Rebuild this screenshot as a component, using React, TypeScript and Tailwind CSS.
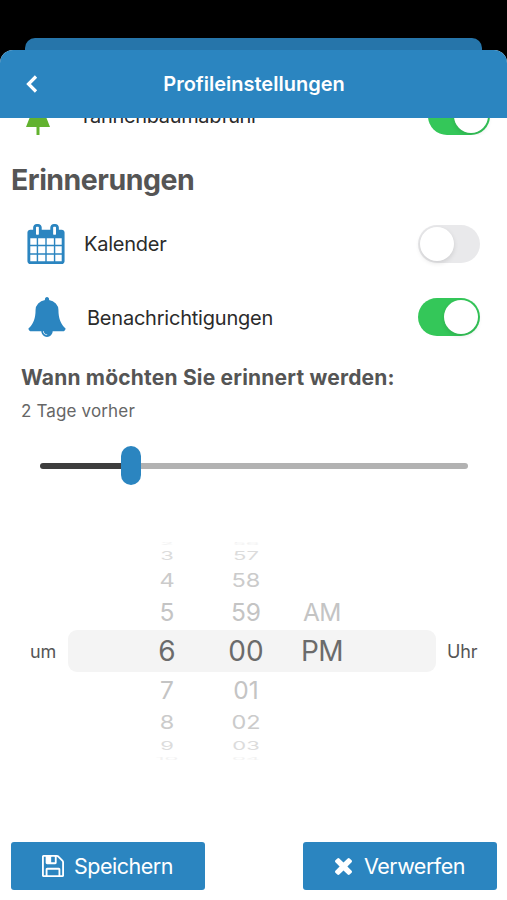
import React from "react";

type IconProps = { className?: string };

function TreeIcon({ className }: IconProps) {
  return (
    <svg viewBox="0 0 24 39" fill="currentColor" className={className}>
      <path d="M12 0 18 9h-3l6 10h-3l2.500 3L24 31H13.500v8h-3v-8H0l3.500-9L6 19H3L9 9H6z" />
    </svg>
  );
}

function CalendarIcon({ className }: IconProps) {
  return (
    <svg viewBox="64 0 1664 1792" fill="currentColor" className={className}>
      <path d="M192 1664h288v-288h-288v288zm352 0h320v-288h-320v288zm-352-352h288v-320h-288v320zm352 0h320v-320h-320v320zm-352-384h288v-288h-288v288zm736 736h320v-288h-320v288zm-384-736h320v-288h-320v288zm768 736h288v-288h-288v288zm-384-352h320v-320h-320v320zm-352-864v-288q0-13-9.5-22.5t-22.5-9.5h-64q-13 0-22.5 9.5t-9.5 22.5v288q0 13 9.5 22.5t22.5 9.5h64q13 0 22.5-9.5t9.5-22.5zm736 864h288v-320h-288v320zm-384-384h320v-288h-320v288zm384 0h288v-288h-288v288zm32-480v-288q0-13-9.5-22.5t-22.5-9.5h-64q-13 0-22.5 9.5t-9.5 22.5v288q0 13 9.5 22.5t22.5 9.5h64q13 0 22.5-9.5t9.5-22.5zm384-64v1280q0 52-38 90t-90 38h-1408q-52 0-90-38t-38-90v-1280q0-52 38-90t90-38h128v-96q0-66 47-113t113-47h64q66 0 113 47t47 113v96h384v-96q0-66 47-113t113-47h64q66 0 113 47t47 113v96h128q52 0 90 38t38 90z" />
    </svg>
  );
}

function BellIcon({ className }: IconProps) {
  return (
    <svg viewBox="64 0 1664 1792" fill="currentColor" className={className}>
      <path d="M912 1696q0-16-16-16-59 0-101.5-42.5t-42.5-101.5q0-16-16-16t-16 16q0 73 51.5 124.5t124.5 51.5q16 0 16-16zm816-288q0 52-38 90t-90 38h-448q0 106-75 181t-181 75-181-75-75-181h-448q-52 0-90-38t-38-90q50-42 91-88t85-119.5 74.5-158.5 50-206 19.5-260q0-152 117-282.5t307-158.5q-8-19-8-39 0-40 28-68t68-28 68 28 28 68q0 20-8 39 190 28 307 158.5t117 282.5q0 139 19.5 260t50 206 74.5 158.5 85 119.5 91 88z" />
    </svg>
  );
}

function SaveIcon({ className }: IconProps) {
  return (
    <svg viewBox="128 128 1536 1536" fill="currentColor" className={className}>
      <path d="M512 1536h768v-384h-768v384zm896 0h128v-896q0-14-10-38.5t-20-34.5l-281-281q-10-10-34-20t-39-10v416q0 40-28 68t-68 28h-576q-40 0-68-28t-28-68v-416h-128v1280h128v-416q0-40 28-68t68-28h832q40 0 68 28t28 68v416zm-384-928v-320q0-13-9.5-22.5t-22.5-9.5h-192q-13 0-22.5 9.5t-9.5 22.5v320q0 13 9.5 22.5t22.5 9.5h192q13 0 22.5-9.5t9.5-22.5zm640 32v928q0 40-28 68t-68 28h-1344q-40 0-68-28t-28-68v-1344q0-40 28-68t68-28h928q40 0 88 20t76 48l280 280q28 28 48 76t20 88z" />
    </svg>
  );
}

function CloseIcon({ className }: IconProps) {
  return (
    <svg viewBox="302 366 1188 1188" fill="currentColor" className={className}>
      <path d="M1490 1322q0 40-28 68l-136 136q-28 28-68 28t-68-28l-294-294-294 294q-28 28-68 28t-68-28l-136-136q-28-28-28-68t28-68l294-294-294-294q-28-28-28-68t28-68l136-136q28-28 68-28t68 28l294 294 294-294q28-28 68-28t68 28l136 136q28 28 28 68t-28 68l-294 294 294 294q28 28 28 68z" />
    </svg>
  );
}

function Toggle({ on }: { on: boolean }) {
  return (
    <button
      role="switch"
      aria-checked={on}
      className={`flex h-[38px] w-[62px] shrink-0 items-center rounded-full p-0.5 ${on ? "justify-end bg-[#34c759]" : "justify-start bg-[#e9e9eb]"}`}
    >
      <span className="h-[34px] w-[34px] rounded-full bg-white shadow-[0_2px_5px_rgba(0,0,0,0.12)]" />
    </button>
  );
}

// one entry per wheel row, from the top edge to the bottom edge
const rowStyles = [
  { row: "h-[5px]", text: "text-[22px] scale-y-[0.15] text-[#f2f2f2]" },
  { row: "h-5", text: "text-[22px] scale-y-[0.53] text-[#dcdcdc]" },
  { row: "h-7", text: "text-[23.5px] scale-y-[0.82] text-[#cbcbcb]" },
  { row: "h-9", text: "text-[24.5px] scale-y-[0.97] text-[#c4c4c4]" },
  { row: "h-[42px]", text: "text-[28px] text-[#6b6b6b]" },
  { row: "h-9", text: "text-[24.5px] scale-y-[0.97] text-[#c4c4c4]" },
  { row: "h-7", text: "text-[23.5px] scale-y-[0.82] text-[#cbcbcb]" },
  { row: "h-5", text: "text-[22px] scale-y-[0.53] text-[#dcdcdc]" },
  { row: "h-[5px]", text: "text-[22px] scale-y-[0.15] text-[#f2f2f2]" },
];

const hours = ["2", "3", "4", "5", "6", "7", "8", "9", "10"];
const minutes = ["56", "57", "58", "59", "00", "01", "02", "03", "04"];
const periods = ["", "", "", "AM", "PM", "", "", "", ""];

function Wheel({ values, className }: { values: string[]; className: string }) {
  return (
    <div className={`flex flex-col ${className}`}>
      {values.map((value, i) => (
        <div
          key={i}
          className={`flex items-center justify-center ${rowStyles[i].row}`}
        >
          <span className={`leading-none ${rowStyles[i].text}`}>{value}</span>
        </div>
      ))}
    </div>
  );
}

export default function App() {
  return (
    <div className="flex h-[900px] w-[507px] flex-col overflow-hidden bg-black pt-[38px] font-['Inter',sans-serif] text-[#2b2b2b]">
      <div className="mx-[25px] h-3 shrink-0 rounded-t-[10px] bg-[#2675aa]" />
      <div className="flex min-h-0 flex-1 flex-col overflow-hidden rounded-t-[13px] bg-white">
        <header className="grid h-[68px] shrink-0 grid-cols-[60px_1fr_60px] items-center bg-[#2b85c0] text-white">
          <button className="pl-[26px]" aria-label="Zurück">
            <svg
              viewBox="0 0 12 18"
              fill="none"
              stroke="currentColor"
              strokeWidth="3.2"
              className="h-[18px] w-3"
            >
              <path d="M10 1.5 2.5 9 10 16.5" />
            </svg>
          </button>
          <h1 className="pl-px text-center text-[20px] font-semibold">
            Profileinstellungen
          </h1>
        </header>

        <main className="flex min-h-0 flex-1 flex-col">
          <div className="flex h-[17px] shrink-0 items-end overflow-hidden pr-[17px] pl-[26px]">
            <TreeIcon className="h-[39px] w-6 text-[#62b22f]" />
            <span className="mb-[7px] ml-[29px] flex-1 text-[20px] leading-6 tracking-[-0.35px]">
              Tannenbaumabfuhr
            </span>
            <Toggle on />
          </div>

          <h2 className="mt-[27px] ml-[11px] text-[28.5px] leading-9 font-bold tracking-[-0.5px] text-[#555]">
            Erinnerungen
          </h2>

          <div className="mt-[9px] flex h-[74px] items-center pr-[27px] pl-[27px]">
            <CalendarIcon className="h-10 w-[38px] text-[#2b85c0]" />
            <span className="ml-[19px] flex-1 text-[20px] tracking-[-0.25px]">
              Kalender
            </span>
            <Toggle on={false} />
          </div>
          <div className="flex h-[73px] items-center pr-[27px] pb-px pl-[28px]">
            <BellIcon className="h-10 w-[38px] text-[#2b85c0]" />
            <span className="ml-[21px] flex-1 pt-px text-[20px] tracking-[-0.22px]">
              Benachrichtigungen
            </span>
            <Toggle on />
          </div>

          <h3 className="mt-2.5 ml-[21px] text-[21px] leading-7 font-bold tracking-[0.19px] text-[#555]">
            Wann möchten Sie erinnert werden:
          </h3>
          <p className="mt-[7px] ml-[21px] text-[17px] leading-6 tracking-[0.15px] text-[#666]">
            2 Tage vorher
          </p>

          <div className="mr-[39px] ml-10 mt-[22px] flex h-10 items-center">
            <div className="mt-px h-1.5 w-[81px] rounded-l-full bg-[#3d3d3d]" />
            <div className="h-[39px] w-5 rounded-[10px] bg-[#2b85c0]" />
            <div className="mt-px h-1.5 flex-1 rounded-r-full bg-[#b2b2b2]" />
          </div>

          <div className="mt-14 flex h-[220px] items-center text-[18px] text-[#555]">
            <span className="w-[68px] pl-[30px] tracking-[-0.2px]">um</span>
            <div className="flex h-[42px] w-[368px] items-center rounded-[9px] bg-[#f4f4f4] pl-[68px]">
              <Wheel values={hours} className="w-[62px]" />
              <Wheel values={minutes} className="ml-[17px] w-[62px]" />
              <Wheel
                values={periods}
                className="ml-3.5 w-[62px] tracking-[-0.5px]"
              />
            </div>
            <span className="pl-[11px] tracking-[-0.2px]">Uhr</span>
          </div>

          <footer className="mt-auto mb-[10px] flex justify-between pr-2.5 pl-[11px] text-[21.5px] tracking-[-0.5px] text-white">
            <button className="flex h-12 w-[194px] items-center justify-center rounded-[3px] bg-[#2b85c0] pr-px">
              <SaveIcon className="mr-[10px] h-[22px] w-[22px]" />
              Speichern
            </button>
            <button className="flex h-12 w-[194px] items-center justify-center rounded-[3px] bg-[#2b85c0]">
              <CloseIcon className="mr-3 h-[17px] w-[17px]" />
              Verwerfen
            </button>
          </footer>
        </main>
      </div>
    </div>
  );
}
